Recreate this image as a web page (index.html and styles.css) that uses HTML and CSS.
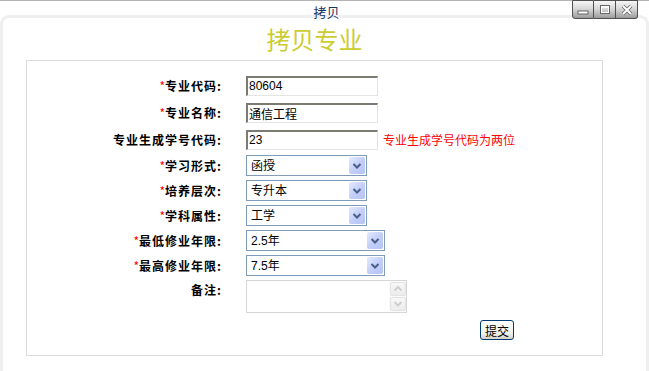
FILE: index.html
```html
<!DOCTYPE html>
<html lang="zh-CN">
<head>
  <meta charset="UTF-8">
  <title>拷贝</title>
  <link rel="stylesheet" href="styles.css">
</head>
<body>
  <div class="topline"></div>
  <div class="window">
    <div class="caption">拷贝</div>

    <div class="controls">
      <span class="ctl first">
        <svg width="14" height="12" viewBox="0 0 14 12"><rect x="2" y="7" width="10" height="3" fill="#fff" stroke="#666" stroke-width="1"/></svg>
      </span>
      <span class="ctl">
        <svg width="14" height="12" viewBox="0 0 14 12"><rect x="2.5" y="1.5" width="9" height="8" fill="none" stroke="#666" stroke-width="1"/><rect x="3.5" y="3" width="7" height="5.5" fill="none" stroke="#fff" stroke-width="1"/><rect x="3" y="2" width="8" height="1.5" fill="#fff"/></svg>
      </span>
      <span class="ctl last">
        <svg width="14" height="12" viewBox="0 0 14 12"><path d="M3 2 L11 10 M11 2 L3 10" stroke="#666" stroke-width="3.6"/><path d="M3 2 L11 10 M11 2 L3 10" stroke="#fff" stroke-width="2"/></svg>
      </span>
    </div>

    <div class="frame">
      <div class="panel">
        <h1 class="heading">拷贝专业</h1>

        <form class="box">
          <div class="grid">
            <label class="lbl row-text"><span class="req">*</span>专业代码:</label>
            <div class="cell"><input class="txt" type="text" value="80604"></div>

            <label class="lbl row-text"><span class="req">*</span>专业名称:</label>
            <div class="cell"><input class="txt" type="text" value="通信工程"></div>

            <label class="lbl row-text">专业生成学号代码:</label>
            <div class="cell">
              <input class="txt" type="text" value="23">
              <span class="hint">专业生成学号代码为两位</span>
            </div>

            <label class="lbl"><span class="req">*</span>学习形式:</label>
            <div class="cell">
              <span class="select">
                <select><option>函授</option></select>
                <span class="drop"><svg width="10" height="8" viewBox="0 0 10 8"><polyline points="1.5,2 5,5.5 8.5,2" fill="none" stroke="#4a5f88" stroke-width="2"/></svg></span>
              </span>
            </div>

            <label class="lbl"><span class="req">*</span>培养层次:</label>
            <div class="cell">
              <span class="select">
                <select><option>专升本</option></select>
                <span class="drop"><svg width="10" height="8" viewBox="0 0 10 8"><polyline points="1.5,2 5,5.5 8.5,2" fill="none" stroke="#4a5f88" stroke-width="2"/></svg></span>
              </span>
            </div>

            <label class="lbl"><span class="req">*</span>学科属性:</label>
            <div class="cell">
              <span class="select">
                <select><option>工学</option></select>
                <span class="drop"><svg width="10" height="8" viewBox="0 0 10 8"><polyline points="1.5,2 5,5.5 8.5,2" fill="none" stroke="#4a5f88" stroke-width="2"/></svg></span>
              </span>
            </div>

            <label class="lbl"><span class="req">*</span>最低修业年限:</label>
            <div class="cell">
              <span class="select wide">
                <select><option>2.5年</option></select>
                <span class="drop"><svg width="10" height="8" viewBox="0 0 10 8"><polyline points="1.5,2 5,5.5 8.5,2" fill="none" stroke="#4a5f88" stroke-width="2"/></svg></span>
              </span>
            </div>

            <label class="lbl"><span class="req">*</span>最高修业年限:</label>
            <div class="cell">
              <span class="select wide">
                <select><option>7.5年</option></select>
                <span class="drop"><svg width="10" height="8" viewBox="0 0 10 8"><polyline points="1.5,2 5,5.5 8.5,2" fill="none" stroke="#4a5f88" stroke-width="2"/></svg></span>
              </span>
            </div>

            <label class="lbl top">备注:</label>
            <div class="cell">
              <div class="memo">
                <textarea></textarea>
                <div class="scroll">
                  <span class="sbtn"><svg width="10" height="8" viewBox="0 0 10 8"><polyline points="1.5,5.5 5,2 8.5,5.5" fill="none" stroke="#cfcfcf" stroke-width="2"/></svg></span>
                  <span class="sbtn"><svg width="10" height="8" viewBox="0 0 10 8"><polyline points="1.5,2 5,5.5 8.5,2" fill="none" stroke="#cfcfcf" stroke-width="2"/></svg></span>
                </div>
              </div>
            </div>
          </div>

          <div class="actions">
            <button type="button" class="submit">提交</button>
          </div>
        </form>
      </div>
    </div>
  </div>
</body>
</html>
```

FILE: styles.css
```css
html, body {
  margin: 0;
  padding: 0;
}
body {
  width: 649px;
  height: 371px;
  overflow: hidden;
  background-color: #fff;
  font-family: "Liberation Sans", "Noto Sans CJK SC", sans-serif;
  font-size: 12px;
  color: #000;
}
.topline {
  height: 1px;
  background-color: #b4b4b4;
}
.window {
  position: relative;
}
.caption {
  position: relative;
  z-index: 1;
  height: 14px;
  line-height: 22px;
  text-align: center;
  font-family: "Noto Sans CJK SC", sans-serif;
  font-size: 13px;
  color: #123466;
  padding-left: 4px;
}
.controls {
  position: absolute;
  top: -1px;
  right: 11px;
  z-index: 2;
  display: flex;
}
.ctl {
  width: 22px;
  height: 19px;
  box-sizing: border-box;
  border: 1px solid #505050;
  border-left: none;
  background: linear-gradient(#f6f6f6, #d8d8d8 45%, #9c9c9c);
  display: flex;
  align-items: center;
  justify-content: center;
}
.ctl.first {
  border-left: 1px solid #505050;
  border-bottom-left-radius: 3px;
}
.ctl.last {
  border-bottom-right-radius: 3px;
}
.frame {
  height: 360px;
  border: 3px solid #efefef;
  border-bottom: none;
  border-radius: 9px 9px 0 0;
}
.panel {
  width: 577px;
  margin-left: 23px;
}
.heading {
  margin: 0;
  height: 42px;
  line-height: 42px;
  text-align: center;
  font-family: "Noto Sans CJK SC", sans-serif;
  font-size: 24px;
  font-weight: normal;
  color: #cccc33;
}
.box {
  box-sizing: border-box;
  width: 577px;
  height: 296px;
  margin: 0;
  padding-top: 13px;
  border: 1px solid #dcdcdc;
}
.grid {
  display: grid;
  grid-template-columns: 195px 1fr;
  grid-template-rows: 23px 23px 23px 21px 21px 21px 21px 21px auto;
  column-gap: 24px;
  row-gap: 4px;
}
.lbl {
  align-self: center;
  text-align: right;
  font-family: "Noto Sans CJK SC", sans-serif;
  font-weight: bold;
  font-size: 12px;
  letter-spacing: 1px;
  line-height: 16px;
  white-space: nowrap;
}
.lbl.top {
  align-self: start;
  padding-top: 2px;
}
.req {
  color: #ff0000;
  font-weight: normal;
  letter-spacing: 0;
}
.cell {
  display: flex;
  align-items: center;
}
.txt {
  box-sizing: border-box;
  width: 132px;
  height: 20px;
  margin: 0;
  padding: 0 1px;
  border-top: 2px solid #7c7b73;
  border-left: 2px solid #7c7b73;
  border-right: 1px solid #e4e4e4;
  border-bottom: 1px solid #e4e4e4;
  font-family: "Liberation Sans", "Noto Sans CJK SC", sans-serif;
  font-size: 12px;
  color: #000;
  outline: none;
}
.hint {
  margin-left: 5px;
  color: #ff0000;
  font-family: "Noto Sans CJK SC", sans-serif;
  font-size: 12px;
  white-space: nowrap;
}
.select {
  box-sizing: border-box;
  display: flex;
  width: 121px;
  height: 21px;
  padding: 1px;
  border: 1px solid #7f9db9;
  background-color: #fff;
}
.select.wide {
  width: 139px;
}
.select select {
  flex: 1;
  min-width: 0;
  -webkit-appearance: none;
  appearance: none;
  border: none;
  background: #fff;
  padding: 0 0 0 3px;
  margin: 0;
  font-family: "Liberation Sans", "Noto Sans CJK SC", sans-serif;
  font-size: 12px;
  color: #000;
  outline: none;
}
.drop {
  width: 16px;
  height: 17px;
  border-radius: 2px;
  background: linear-gradient(135deg, #e4ebfe, #c4cff8 50%, #b3c3f2);
  display: flex;
  align-items: center;
  justify-content: center;
}
.memo {
  box-sizing: border-box;
  display: flex;
  width: 161px;
  height: 33px;
  border: 1px solid #d6d6d6;
}
.memo textarea {
  flex: 1;
  border: none;
  resize: none;
  margin: 0;
  padding: 0;
  outline: none;
}
.scroll {
  width: 17px;
  display: flex;
  flex-direction: column;
  gap: 1px;
  padding: 1px 0 1px 1px;
  box-sizing: border-box;
  background-color: #fafafa;
}
.sbtn {
  flex: 1;
  box-sizing: border-box;
  border: 1px solid #e3e3e3;
  border-radius: 2px;
  background: linear-gradient(#f7f7f7, #ececec);
  display: flex;
  align-items: center;
  justify-content: center;
}
.actions {
  display: flex;
  justify-content: flex-end;
  padding-right: 88px;
  margin-top: 7px;
}
.submit {
  box-sizing: border-box;
  width: 34px;
  height: 20px;
  padding: 0;
  border: 1px solid #003c74;
  border-radius: 3px;
  background: linear-gradient(#ffffff, #f0f0ea 70%, #d6d0c5);
  font-family: "Noto Sans CJK SC", sans-serif;
  font-size: 12px;
  color: #000;
  cursor: pointer;
}
```
